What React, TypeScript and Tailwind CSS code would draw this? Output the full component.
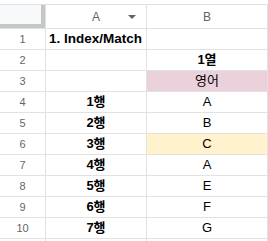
const rows: { a: string; b: string; bg?: string; bBold?: boolean }[] = [
  { a: "", b: "", bg: "" },
  { a: "", b: "1열", bBold: true },
  { a: "", b: "영어", bg: "bg-[#ead1dc]" },
  { a: "1행", b: "A" },
  { a: "2행", b: "B" },
  { a: "3행", b: "C", bg: "bg-[#fff2cc]" },
  { a: "4행", b: "A" },
  { a: "5행", b: "E" },
  { a: "6행", b: "F" },
  { a: "7행", b: "G" },
  { a: "", b: "" },
];

const App = () => {
  return (
    <div
      className="w-[268px] h-[241px] overflow-hidden bg-white text-[#000]"
      style={{ fontFamily: '"Liberation Sans", Arial, "Noto Sans CJK KR", sans-serif' }}
    >
      <div className="h-[4px]" />
      {/* header row */}
      <div className="flex h-[25px] border-y border-[#e0e0e0]">
        <div className="w-[46px] shrink-0 border-r border-[#e0e0e0]">
          <div className="w-[45px] h-[23px] bg-[#f8f9fa] border-r-[4px] border-b-[4px] border-[#c4c7c5]" />
        </div>
        <div className="w-[101px] shrink-0 border-r border-[#e0e0e0] relative flex items-center justify-center text-[12px] text-[#5f6368]">
          A
          <span className="absolute right-[10px] top-[10px] w-0 h-0 border-l-[4px] border-r-[4px] border-t-[4px] border-l-transparent border-r-transparent border-t-[#5f6368]" />
        </div>
        <div className="w-[121px] shrink-0 border-r border-[#e0e0e0] flex items-center justify-center text-[12px] text-[#5f6368]">
          B
        </div>
      </div>
      {rows.map((r, i) => (
        <div key={i} className="flex h-[21px] border-b border-[#e2e2e2]">
          <div className="w-[46px] shrink-0 border-r border-[#e0e0e0] flex items-center justify-center text-[11px] text-[#666]">
            {i < 10 ? i + 1 : ""}
          </div>
          <div className="w-[101px] shrink-0 border-r border-[#e2e2e2] flex items-center justify-center text-[13px] font-bold relative">
            {i === 0 ? (
              <span className="absolute left-[3px] whitespace-nowrap z-10 text-[13.5px]">1. Index/Match</span>
            ) : (
              r.a
            )}
          </div>
          <div
            className={`w-[121px] shrink-0 border-r border-[#e2e2e2] flex items-center justify-center text-[13px] ${r.bg ?? ""} ${r.bBold ? "font-bold" : ""}`}
          >
            {r.b}
          </div>
        </div>
      ))}
    </div>
  );
};

export default App;
